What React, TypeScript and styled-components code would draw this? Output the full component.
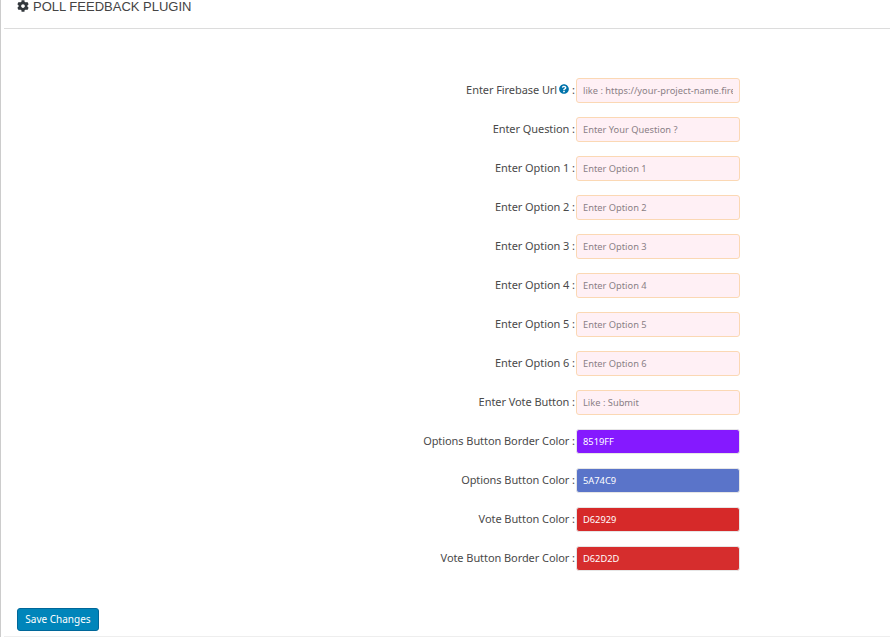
import { memo } from 'react';
import styled, { createGlobalStyle } from 'styled-components';
import { FaCog, FaQuestionCircle } from 'react-icons/fa';

const GlobalStyle = createGlobalStyle`
  html, body {
    margin: 0;
    padding: 0;
    background: #fff;
    overflow: hidden;
  }
`;

const Page = styled.div`
  box-sizing: border-box;
  width: 890px;
  height: 637px;
  border-left: 1px solid #ccc;
  padding-left: 3px;
  font-family: 'Noto Sans', sans-serif;
  overflow: hidden;
`;

const Header = styled.h1`
  box-sizing: border-box;
  height: 29px;
  margin: 0;
  padding: 0 0 0 13px;
  display: flex;
  align-items: flex-start;
  gap: 4px;
  border-bottom: 1px solid #dcdcdc;
  font-family: 'Liberation Sans', sans-serif;
  font-size: 13px;
  font-weight: 400;
  line-height: 14px;
  color: #444;
  svg {
    width: 12px;
    height: 12px;
    color: #32373c;
  }
`;

const Form = styled.form`
  display: flex;
  flex-direction: column;
  gap: 14px;
  padding-top: 49px;
`;

const Row = styled.div`
  display: flex;
  align-items: center;
  height: 25px;
`;

const Label = styled.label`
  box-sizing: border-box;
  width: 572px;
  padding-right: 1px;
  display: flex;
  justify-content: flex-end;
  align-items: center;
  font-size: 11px;
  letter-spacing: -0.07px;
  color: #4a4a4a;
  white-space: pre;
  margin-top: -3px;
  svg {
    width: 10px;
    height: 10px;
    margin: 0 3px 0 2px;
    color: #0073aa;
  }
`;

const Field = styled.input<{ $color?: string }>`
  box-sizing: border-box;
  width: 164px;
  height: 25px;
  padding: 0 6px;
  font-family: inherit;
  font-size: 9.3px;
  border-radius: 3px;
  outline: none;
  border: 1px solid ${(p) => (p.$color ? '#e6e6e6' : '#fbd8b4')};
  background: ${(p) => p.$color ?? '#fff0f5'};
  color: ${(p) => (p.$color ? '#fff' : '#8a7f85')};
  &::placeholder {
    color: #8a7f85;
    opacity: 1;
  }
`;

const Footer = styled.div`
  padding: 37px 0 0 13px;
`;

const SaveButton = styled.button`
  display: block;
  box-sizing: border-box;
  width: 82px;
  height: 23px;
  padding: 0 0 2px;
  font-family: inherit;
  font-size: 10px;
  color: #fff;
  background: #0085ba;
  border: 1px solid #006799;
  border-radius: 3px;
`;

const BottomRule = styled.div`
  margin-top: 5px;
  border-top: 1px solid #eee;
`;

const textRows = [
  { label: 'Enter Question', placeholder: 'Enter Your Question ?' },
  { label: 'Enter Option 1', placeholder: 'Enter Option 1' },
  { label: 'Enter Option 2', placeholder: 'Enter Option 2' },
  { label: 'Enter Option 3', placeholder: 'Enter Option 3' },
  { label: 'Enter Option 4', placeholder: 'Enter Option 4' },
  { label: 'Enter Option 5', placeholder: 'Enter Option 5' },
  { label: 'Enter Option 6', placeholder: 'Enter Option 6' },
  { label: 'Enter Vote Button', placeholder: 'Like : Submit' },
];

const colorRows = [
  { label: 'Options Button Border Color', value: '8519FF' },
  { label: 'Options Button Color', value: '5A74C9' },
  { label: 'Vote Button Color', value: 'D62929' },
  { label: 'Vote Button Border Color', value: 'D62D2D' },
];

const App = () => {
  return (
    <Page>
      <GlobalStyle />
      <Header>
        <FaCog />
        POLL FEEDBACK PLUGIN
      </Header>
      <Form>
        <Row>
          <Label>
            Enter Firebase Url
            <FaQuestionCircle />:
          </Label>
          <Field placeholder="like : https://your-project-name.firebaseio.com" />
        </Row>
        {textRows.map((row) => (
          <Row key={row.label}>
            <Label>{row.label} :</Label>
            <Field placeholder={row.placeholder} />
          </Row>
        ))}
        {colorRows.map((row) => (
          <Row key={row.label}>
            <Label>{row.label} :</Label>
            <Field $color={`#${row.value}`} defaultValue={row.value} />
          </Row>
        ))}
      </Form>
      <Footer>
        <SaveButton type="button">Save Changes</SaveButton>
      </Footer>
      <BottomRule />
    </Page>
  );
};

export default memo(App);
